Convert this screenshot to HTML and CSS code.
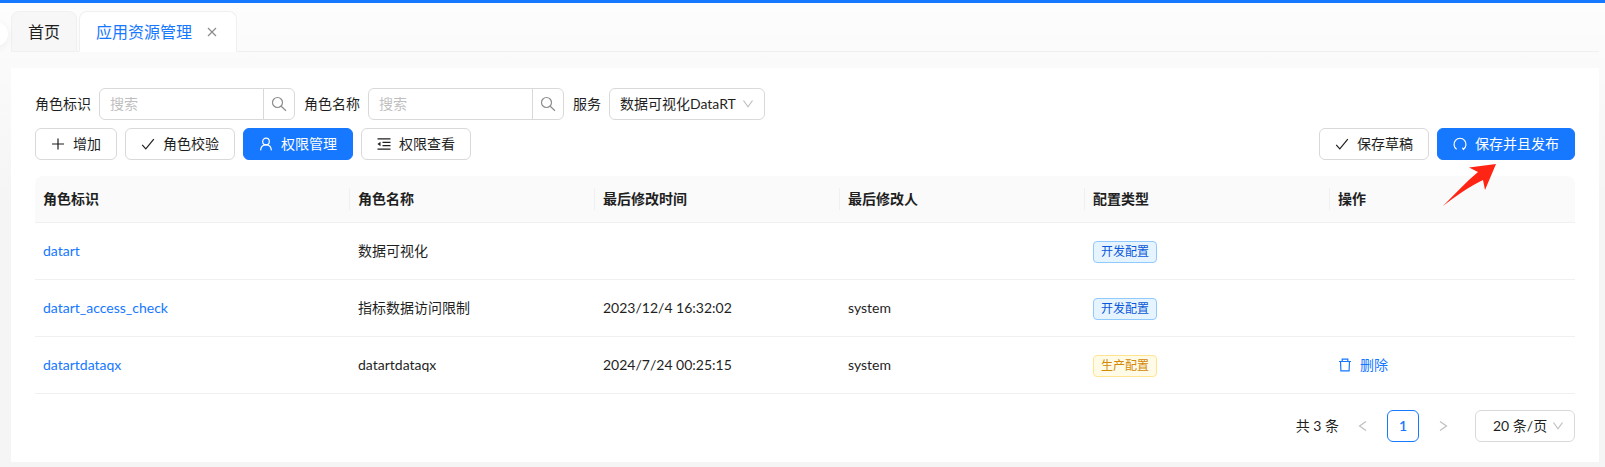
FILE: index.html
```html
<!DOCTYPE html>
<html lang="zh-CN">
<head>
  <meta charset="UTF-8">
  <meta name="viewport" content="width=device-width, initial-scale=1.0">
  <title>应用资源管理</title>
  <link rel="stylesheet" href="styles.css">
</head>
<body>
  <div class="progress"></div>
  <div class="collapse-handle"></div>

  <nav class="tabs">
    <a class="tab" href="#">首页</a>
    <div class="tab active">
      <a href="#">应用资源管理</a>
      <button class="tab-close" aria-label="关闭">
        <svg width="12" height="12" viewBox="0 0 12 12"><path d="M2 2l8 8M10 2l-8 8"/></svg>
      </button>
    </div>
  </nav>

  <main class="panel">
    <form class="filters">
      <label for="role-id">角色标识</label>
      <div class="search">
        <input type="text" id="role-id" placeholder="搜索">
        <button type="button" aria-label="搜索">
          <svg width="16" height="16" viewBox="0 0 16 16"><circle cx="6.5" cy="6.5" r="5"/><path d="M10.2 10.2l4.8 4.6"/></svg>
        </button>
      </div>
      <label for="role-name">角色名称</label>
      <div class="search">
        <input type="text" id="role-name" placeholder="搜索">
        <button type="button" aria-label="搜索">
          <svg width="16" height="16" viewBox="0 0 16 16"><circle cx="6.5" cy="6.5" r="5"/><path d="M10.2 10.2l4.8 4.6"/></svg>
        </button>
      </div>
      <label for="service">服务</label>
      <div class="select service">
        <select id="service"><option>数据可视化DataRT</option></select>
        <svg width="12" height="12" viewBox="0 0 12 12"><path d="M1.5 2.5L6 8.8l4.5-6.3"/></svg>
      </div>
    </form>

    <div class="toolbar">
      <button class="btn">
        <svg width="14" height="14" viewBox="0 0 14 14"><path d="M7 1.5v11M1 7h12"/></svg>增加
      </button>
      <button class="btn">
        <svg width="14" height="14" viewBox="0 0 14 14"><path d="M1.2 7.8l3.6 4L12.8 2.2"/></svg>角色校验
      </button>
      <button class="btn primary">
        <svg width="14" height="14" viewBox="0 0 14 14"><circle cx="7" cy="4.5" r="3.3"/><path d="M1.6 13.4C1.8 10 4 7.9 7 7.9s5.2 2.1 5.4 5.5"/></svg>权限管理
      </button>
      <button class="btn">
        <svg width="14" height="14" viewBox="0 0 14 14"><path d="M.5 1.8h13M5.5 5.3h8M5.5 8.7h8M.5 12.2h13"/><path class="solid" d="M3.5 4.7v4.600L.5 7z"/></svg>权限查看
      </button>
      <button class="btn push">
        <svg width="14" height="14" viewBox="0 0 14 14"><path d="M1.2 7.8l3.6 4L12.8 2.2"/></svg>保存草稿
      </button>
      <div class="publish">
        <button class="btn primary">
          <svg width="14" height="14" viewBox="0 0 14 14"><path d="M3.600 12.2A6 6 0 1 1 10.400 12.2"/><path class="solid" d="M8.800 10.600l3 .6-1.600 2.300z"/></svg>保存并且发布
        </button>
        <svg class="arrow" width="54" height="42" viewBox="0 0 54 42"><path d="M53 0L26 3.500l9 4.500C23 18 12 30 0 42c13-10 27-20 40-26l2 10z"/></svg>
      </div>
    </div>

    <table class="roles">
      <thead>
        <tr>
          <th class="col-id">角色标识</th>
          <th>角色名称</th>
          <th>最后修改时间</th>
          <th>最后修改人</th>
          <th>配置类型</th>
          <th>操作</th>
        </tr>
      </thead>
      <tbody>
        <tr>
          <td><a href="#">datart</a></td>
          <td>数据可视化</td>
          <td></td>
          <td></td>
          <td><span class="tag dev">开发配置</span></td>
          <td></td>
        </tr>
        <tr>
          <td><a href="#">datart_access_check</a></td>
          <td>指标数据访问限制</td>
          <td>2023/12/4 16:32:02</td>
          <td>system</td>
          <td><span class="tag dev">开发配置</span></td>
          <td></td>
        </tr>
        <tr>
          <td><a href="#">datartdataqx</a></td>
          <td>datartdataqx</td>
          <td>2024/7/24 00:25:15</td>
          <td>system</td>
          <td><span class="tag prod">生产配置</span></td>
          <td>
            <button class="delete">
              <svg width="14" height="14" viewBox="0 0 14 14"><path d="M1 3.5h12M4.2 3.5V1.2h5.6v2.3M2.5 3.5l.4 9.3h8.2l.4-9.3"/></svg>删除
            </button>
          </td>
        </tr>
      </tbody>
    </table>

    <div class="pagination">
      <span class="total">共 3 条</span>
      <button class="page-arrow" aria-label="上一页" disabled>
        <svg width="12" height="12" viewBox="0 0 12 12"><path d="M9 1.5L2.5 6 9 10.5"/></svg>
      </button>
      <button class="page-number">1</button>
      <button class="page-arrow" aria-label="下一页" disabled>
        <svg width="12" height="12" viewBox="0 0 12 12"><path d="M3 1.5L9.5 6 3 10.5"/></svg>
      </button>
      <div class="select page-size">
        <select aria-label="每页条数"><option>20 条/页</option></select>
        <svg width="12" height="12" viewBox="0 0 12 12"><path d="M1.5 2.5L6 8.8l4.5-6.3"/></svg>
      </div>
    </div>
  </main>
</body>
</html>
```
FILE: styles.css
```css
* {
  box-sizing: border-box;
}

body {
  margin: 0;
  padding: 0 6px 5px 11px;
  background: linear-gradient(#fdfdfd, #fafafa 70px, #f5f5f5 200px);
  color: #1f1f1f;
  font-family: Lato, "Noto Sans CJK SC", sans-serif;
  font-size: 14px;
  line-height: 22px;
}

a {
  color: #1677ff;
  text-decoration: none;
}

button,
input,
select {
  margin: 0;
  color: inherit;
  font: inherit;
}

button {
  display: flex;
  align-items: center;
  justify-content: center;
  padding: 0;
  border: none;
  background: none;
  cursor: pointer;
}

svg {
  flex: none;
  fill: none;
  stroke: currentColor;
  stroke-width: 1.2;
}

.solid {
  fill: currentColor;
  stroke: none;
}

.progress {
  height: 3px;
  margin: 0 -6px 8px -11px;
  background: #1677ff;
}

.collapse-handle {
  position: absolute;
  top: 22px;
  left: -16px;
  width: 24px;
  height: 24px;
  border-radius: 50%;
  background: #fff;
  box-shadow: 0 2px 8px rgba(0, 0, 0, 0.06);
}

/* tabs */
.tabs {
  display: flex;
  gap: 2px;
  margin-bottom: 16px;
  box-shadow: inset 0 -1px #f0f0f0;
}

.tab {
  display: flex;
  align-items: center;
  gap: 14px;
  height: 41px;
  padding: 0 16px;
  border: 1px solid #f0f0f0;
  border-radius: 8px 8px 0 0;
  background: #f7f7f7;
  color: #1f1f1f;
  font-size: 16px;
}

.tab.active {
  padding-right: 18px;
  border-bottom-color: #fff;
  background: #fff;
}

.tab-close {
  color: #8c8c8c;
}

/* main panel */
.panel {
  padding: 20px 24px;
  background: #fff;
}

.filters,
.toolbar {
  display: flex;
  align-items: center;
  gap: 8px;
  margin-bottom: 8px;
}

.search {
  display: flex;
  width: 196px;
  height: 32px;
  margin-right: 1px;
  border: 1px solid #d9d9d9;
  border-radius: 6px;
}

.search input {
  flex: 1;
  min-width: 0;
  padding: 0 10px;
  border: none;
  background: none;
  outline: none;
}

.search input::placeholder {
  color: #bfbfbf;
}

.search button {
  width: 31px;
  border-left: 1px solid #d9d9d9;
  color: #8c8c8c;
}

.select {
  position: relative;
  height: 32px;
}

.select select {
  width: 100%;
  height: 32px;
  padding: 0 10px;
  border: 1px solid #d9d9d9;
  border-radius: 6px;
  background: #fff;
  appearance: none;
}

.select svg {
  position: absolute;
  top: 10px;
  right: 11px;
  color: #bfbfbf;
  pointer-events: none;
}

.service {
  width: 156px;
}

.toolbar {
  margin-bottom: 16px;
}

.btn {
  gap: 8px;
  height: 32px;
  padding: 0 15px;
  border: 1px solid #d9d9d9;
  border-radius: 6px;
  background: #fff;
}

.btn.primary {
  border-color: #1677ff;
  background: #1677ff;
  color: #fff;
}

.push {
  margin-left: auto;
}

.publish {
  position: relative;
}

.arrow {
  position: absolute;
  z-index: 1;
  top: 36px;
  left: 6px;
  fill: #ff2414;
  stroke: none;
  pointer-events: none;
}

/* table */
.roles {
  width: 100%;
  border-collapse: separate;
  border-spacing: 0;
  table-layout: fixed;
}

.roles th,
.roles td {
  padding: 0 8px;
  border-bottom: 1px solid #f0f0f0;
  text-align: left;
}

.roles th {
  position: relative;
  height: 47px;
  background: #fafafa;
  font-weight: 600;
}

.roles th:not(:last-child)::after {
  content: "";
  position: absolute;
  top: 12px;
  right: 0;
  width: 1px;
  height: 22px;
  background: #f0f0f0;
}

.roles th:first-child {
  border-top-left-radius: 8px;
}

.roles th:last-child {
  border-top-right-radius: 8px;
}

.roles td {
  height: 57px;
}

.col-id {
  width: 315px;
}

.tag {
  display: inline-block;
  padding: 0 7px;
  border: 1px solid;
  border-radius: 4px;
  font-size: 12px;
  line-height: 20px;
  vertical-align: middle;
}

.tag.dev {
  border-color: #91caff;
  background: #e6f4ff;
  color: #0958d9;
}

.tag.prod {
  border-color: #ffe58f;
  background: #fffbe6;
  color: #d48806;
}

.delete {
  gap: 8px;
  color: #1677ff;
}

/* pagination */
.pagination {
  display: flex;
  align-items: center;
  justify-content: flex-end;
  gap: 8px;
  margin-top: 16px;
}

.page-arrow,
.page-number {
  width: 32px;
  height: 32px;
}

.page-arrow {
  color: #bfbfbf;
}

.page-number {
  border: 1px solid #1677ff;
  border-radius: 6px;
  color: #1677ff;
  font-weight: 600;
}

.page-size {
  width: 100px;
  margin-left: 8px;
}

.page-size select {
  padding-left: 17px;
}
```
